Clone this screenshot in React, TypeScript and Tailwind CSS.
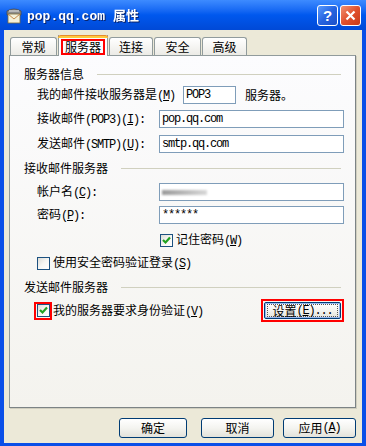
import React from 'react';

const latin = "font-['Liberation_Mono',monospace] text-[12px] tracking-[-1.2px]";

function M({ k }: { k: string }) {
  // mnemonic like (M) with the letter underlined
  return (
    <span className={latin}>
      (<span className="underline underline-offset-1">{k}</span>)
    </span>
  );
}

function Check({ checked }: { checked?: boolean }) {
  return (
    <div className="w-[13px] h-[13px] border border-[#1C5180] bg-gradient-to-br from-[#DCDCD7] via-[#F6F6F3] to-white flex items-center justify-center shrink-0">
      {checked && (
        <svg width="9" height="9" viewBox="0 0 9 9">
          <path d="M1 4 L3.5 6.5 L8 1.5" stroke="#21A121" strokeWidth="2.2" fill="none" />
        </svg>
      )}
    </div>
  );
}

function Section({ title, className }: { title: string; className?: string }) {
  return (
    <div className={`flex items-center h-[16px] pl-[14px] pr-[14px] ${className ?? ''}`}>
      <span className="leading-none">{title}</span>
      <div className="flex-1 h-px bg-[#D0D0BF] ml-[13px]" />
    </div>
  );
}

function Field({ label, value, className, blur }: { label: React.ReactNode; value?: string; className?: string; blur?: boolean }) {
  return (
    <div className={`flex items-center h-[18px] pl-[27px] ${className ?? ''}`}>
      <div className="w-[122px] leading-none whitespace-nowrap">{label}</div>
      <div className="w-[185px] h-[18px] border border-[#7F9DB9] bg-white flex items-center px-[2px]">
        {blur ? (
          <div className="w-[45px] h-[5px] bg-gradient-to-r from-[#9A9A9A] via-[#B8B8B8] to-[#D8D8D8] blur-[1px]" />
        ) : (
          <span className={latin}>{value}</span>
        )}
      </div>
    </div>
  );
}

function Tab({ label, w, active }: { label: React.ReactNode; w: string; active?: boolean }) {
  if (active) {
    return (
      <div className={`${w} h-[21px] -mb-px relative z-10 border-x border-[#919B9C] bg-[#FCFCFE] flex flex-col`}>
        <div className="h-[3px] bg-[#FFC83C] border-t border-[#E68B2C] -mx-px rounded-t-[3px]" />
        <div className="flex-1 flex items-center justify-center">
          <div className="border-2 border-[#FF0000] px-[2px] h-[16px] flex items-center leading-none">{label}</div>
        </div>
      </div>
    );
  }
  return (
    <div className={`${w} h-[18px] border border-b-0 border-[#919B9C] rounded-t-[3px] bg-gradient-to-b from-white to-[#ECEBE6] flex items-center justify-center leading-none`}>
      {label}
    </div>
  );
}

function Btn({ children, w }: { children: React.ReactNode; w: string }) {
  return (
    <div className={`${w} h-[20px] border border-[#003C74] rounded-[3px] bg-gradient-to-b from-white via-[#F4F4F0] to-[#E3E2DA] flex items-center justify-center leading-none`}>
      {children}
    </div>
  );
}

export default function App() {
  return (
    <div className="w-[366px] h-[446px] flex flex-col bg-[#0A4FE8] font-['Noto_Sans_CJK_SC',sans-serif] text-[12px] text-black overflow-hidden">
      {/* Title bar */}
      <div className="h-[30px] shrink-0 flex items-center px-[5px] bg-gradient-to-b from-[#3D8BFF] via-[#0058EE] to-[#0049D6]">
        <svg width="18" height="17" viewBox="0 0 18 17" className="mr-[4px]">
          <path d="M2 4 Q9 0 16 4 L16 8 L2 8 Z" fill="#8C8C8C" stroke="#4A4A4A" strokeWidth="0.8" />
          <rect x="3" y="7" width="12" height="9" fill="#F4F0D8" stroke="#7A6A3A" strokeWidth="0.8" />
          <path d="M3 7 L9 12 L15 7" fill="none" stroke="#C08040" strokeWidth="0.9" />
          <rect x="4" y="3" width="10" height="2" fill="#B8B8B8" />
        </svg>
        <span className="text-white font-bold text-[13px] leading-none drop-shadow-[1px_1px_0_#0A246A]">
          <span className="font-['Liberation_Mono',monospace]">pop.qq.com</span>
          <span className="ml-[8px]">属性</span>
        </span>
        <div className="ml-auto flex gap-[2px] mt-[1px]">
          <div className="w-[21px] h-[21px] rounded-[3px] border border-white bg-gradient-to-br from-[#5A9BFF] via-[#2663E0] to-[#1B4FC8] flex items-center justify-center text-white font-bold text-[15px] leading-none font-['Liberation_Sans',sans-serif]">
            ?
          </div>
          <div className="w-[21px] h-[21px] rounded-[3px] border border-white bg-gradient-to-br from-[#F09070] via-[#E0502C] to-[#C83A18] flex items-center justify-center">
            <svg width="11" height="11" viewBox="0 0 11 11">
              <path d="M1.5 1.5 L9.5 9.5 M9.5 1.5 L1.5 9.5" stroke="white" strokeWidth="2.2" />
            </svg>
          </div>
        </div>
      </div>

      {/* Body */}
      <div className="flex-1 mx-[4px] mb-[3px] bg-[#ECE9D8] flex flex-col pl-[5px] pr-[6px] pt-[5px]">
        {/* Tabs */}
        <div className="flex items-end h-[20px] pl-px gap-[1px]">
          <Tab label="常规" w="w-[47px]" />
          <Tab label="服务器" w="w-[50px]" active />
          <Tab label="连接" w="w-[44px]" />
          <Tab label="安全" w="w-[47px]" />
          <Tab label="高级" w="w-[45px]" />
        </div>

        {/* Panel */}
        <div className="h-[353px] border border-[#919B9C] border-r-[#7C8385] border-b-[#7C8385] bg-gradient-to-b from-[#FCFCFE] to-[#F4F3EE] shadow-[1px_1px_0_#D0CEBF] flex flex-col pt-[10px]">
          <Section title="服务器信息" />
          <div className="flex items-center h-[18px] pl-[27px] mt-[4px]">
            <span className="leading-none whitespace-nowrap">
              我的邮件接收服务器是<M k="M" />
            </span>
            <div className="ml-[8px] w-[53px] h-[18px] border border-[#7F9DB9] bg-white flex items-center px-[2px]">
              <span className={latin}>POP3</span>
            </div>
            <span className="ml-[9px] leading-none">服务器。</span>
          </div>
          <Field
            className="mt-[6px]"
            label={<>接收邮件<span className={latin}>(POP3)</span><M k="I" /><span className={latin}>:</span></>}
            value="pop.qq.com"
          />
          <Field
            className="mt-[7px]"
            label={<>发送邮件<span className={latin}>(SMTP)</span><M k="U" /><span className={latin}>:</span></>}
            value="smtp.qq.com"
          />

          <Section title="接收邮件服务器" className="mt-[7px]" />
          <Field
            className="mt-[7px]"
            label={<>帐户名<M k="C" /><span className={latin}>:</span></>}
            blur
          />
          <Field
            className="mt-[5px]"
            label={<>密码<M k="P" /><span className={latin}>:</span></>}
            value="******"
          />
          <div className="flex items-center h-[16px] pl-[150px] mt-[8px]">
            <Check checked />
            <span className="ml-[3px] leading-none">记住密码<M k="W" /></span>
          </div>
          <div className="flex items-center h-[16px] pl-[27px] mt-[7px]">
            <Check />
            <span className="ml-[3px] leading-none">使用安全密码验证登录<M k="S" /></span>
          </div>

          <Section title="发送邮件服务器" className="mt-[8px]" />
          <div className="flex items-center h-[23px] pl-[24px] pr-[11px] mt-[4px]">
            <div className="border-2 border-[#FF0000] w-[18px] h-[18px] flex items-center justify-center">
              <Check checked />
            </div>
            <span className="ml-[1px] leading-none">我的服务器要求身份验证<M k="V" /></span>
            <div className="ml-auto border-2 border-[#FF0000] w-[83px] h-[23px] p-px">
              <div className="h-full border border-[#003C74] rounded-[2px] bg-gradient-to-b from-white via-[#F4F4F0] to-[#E3E2DA] shadow-[inset_0_0_0_1px_#98B8F0] flex items-center justify-center">
                <div className="border border-dotted border-[#555] px-[4px] h-[13px] flex items-center leading-none">
                  设置<M k="E" /><span className={latin}>...</span>
                </div>
              </div>
            </div>
          </div>
        </div>

        {/* Buttons */}
        <div className="flex justify-end gap-[14px] mt-[10px] pr-[0px]">
          <Btn w="w-[68px]">确定</Btn>
          <div className="flex gap-[9px]">
            <Btn w="w-[73px]">取消</Btn>
            <Btn w="w-[73px]">应用<M k="A" /></Btn>
          </div>
        </div>
      </div>
    </div>
  );
}
